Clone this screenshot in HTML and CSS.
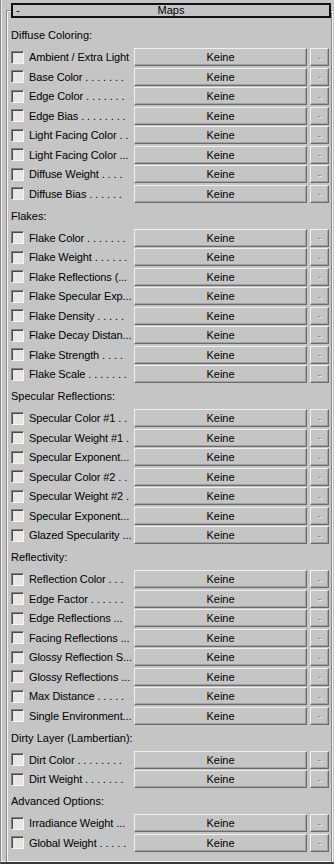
FILE: index.html
```html
<!DOCTYPE html>
<html>
<head>
<meta charset="utf-8">
<link rel="stylesheet" href="styles.css">
</head>
<body>
<div class="window">
  <div class="header"><span class="hminus">-</span><span class="htitle">Maps</span><span></span></div>
  <div class="frame">
    <div class="section">
      <div class="stitle">Diffuse Coloring:</div>
      <div class="row"><span class="cb"></span><span class="lbl">Ambient / Extra Light</span><span class="btn">Keine</span><span class="sbtn">-</span></div>
      <div class="row"><span class="cb"></span><span class="lbl">Base Color . . . . . . .</span><span class="btn">Keine</span><span class="sbtn">-</span></div>
      <div class="row"><span class="cb"></span><span class="lbl">Edge Color . . . . . . .</span><span class="btn">Keine</span><span class="sbtn">-</span></div>
      <div class="row"><span class="cb"></span><span class="lbl">Edge Bias . . . . . . . .</span><span class="btn">Keine</span><span class="sbtn">-</span></div>
      <div class="row"><span class="cb"></span><span class="lbl">Light Facing Color . .</span><span class="btn">Keine</span><span class="sbtn">-</span></div>
      <div class="row"><span class="cb"></span><span class="lbl">Light Facing Color ...</span><span class="btn">Keine</span><span class="sbtn">-</span></div>
      <div class="row"><span class="cb"></span><span class="lbl">Diffuse Weight . . . .</span><span class="btn">Keine</span><span class="sbtn">-</span></div>
      <div class="row"><span class="cb"></span><span class="lbl">Diffuse Bias . . . . . .</span><span class="btn">Keine</span><span class="sbtn">-</span></div>
    </div>
    <div class="section">
      <div class="stitle">Flakes:</div>
      <div class="row"><span class="cb"></span><span class="lbl">Flake Color . . . . . . .</span><span class="btn">Keine</span><span class="sbtn">-</span></div>
      <div class="row"><span class="cb"></span><span class="lbl">Flake Weight . . . . . .</span><span class="btn">Keine</span><span class="sbtn">-</span></div>
      <div class="row"><span class="cb"></span><span class="lbl">Flake Reflections (...</span><span class="btn">Keine</span><span class="sbtn">-</span></div>
      <div class="row"><span class="cb"></span><span class="lbl">Flake Specular Exp...</span><span class="btn">Keine</span><span class="sbtn">-</span></div>
      <div class="row"><span class="cb"></span><span class="lbl">Flake Density . . . . .</span><span class="btn">Keine</span><span class="sbtn">-</span></div>
      <div class="row"><span class="cb"></span><span class="lbl">Flake Decay Distan...</span><span class="btn">Keine</span><span class="sbtn">-</span></div>
      <div class="row"><span class="cb"></span><span class="lbl">Flake Strength . . . .</span><span class="btn">Keine</span><span class="sbtn">-</span></div>
      <div class="row"><span class="cb"></span><span class="lbl">Flake Scale . . . . . . .</span><span class="btn">Keine</span><span class="sbtn">-</span></div>
    </div>
    <div class="section">
      <div class="stitle">Specular Reflections:</div>
      <div class="row"><span class="cb"></span><span class="lbl">Specular Color #1 . .</span><span class="btn">Keine</span><span class="sbtn">-</span></div>
      <div class="row"><span class="cb"></span><span class="lbl">Specular Weight #1 .</span><span class="btn">Keine</span><span class="sbtn">-</span></div>
      <div class="row"><span class="cb"></span><span class="lbl">Specular Exponent...</span><span class="btn">Keine</span><span class="sbtn">-</span></div>
      <div class="row"><span class="cb"></span><span class="lbl">Specular Color #2 . .</span><span class="btn">Keine</span><span class="sbtn">-</span></div>
      <div class="row"><span class="cb"></span><span class="lbl">Specular Weight #2 .</span><span class="btn">Keine</span><span class="sbtn">-</span></div>
      <div class="row"><span class="cb"></span><span class="lbl">Specular Exponent...</span><span class="btn">Keine</span><span class="sbtn">-</span></div>
      <div class="row"><span class="cb"></span><span class="lbl">Glazed Specularity ...</span><span class="btn">Keine</span><span class="sbtn">-</span></div>
    </div>
    <div class="section">
      <div class="stitle">Reflectivity:</div>
      <div class="row"><span class="cb"></span><span class="lbl">Reflection Color . . .</span><span class="btn">Keine</span><span class="sbtn">-</span></div>
      <div class="row"><span class="cb"></span><span class="lbl">Edge Factor . . . . . .</span><span class="btn">Keine</span><span class="sbtn">-</span></div>
      <div class="row"><span class="cb"></span><span class="lbl">Edge Reflections ...</span><span class="btn">Keine</span><span class="sbtn">-</span></div>
      <div class="row"><span class="cb"></span><span class="lbl">Facing Reflections ...</span><span class="btn">Keine</span><span class="sbtn">-</span></div>
      <div class="row"><span class="cb"></span><span class="lbl">Glossy Reflection S...</span><span class="btn">Keine</span><span class="sbtn">-</span></div>
      <div class="row"><span class="cb"></span><span class="lbl">Glossy Reflections ...</span><span class="btn">Keine</span><span class="sbtn">-</span></div>
      <div class="row"><span class="cb"></span><span class="lbl">Max Distance . . . . .</span><span class="btn">Keine</span><span class="sbtn">-</span></div>
      <div class="row"><span class="cb"></span><span class="lbl">Single Environment...</span><span class="btn">Keine</span><span class="sbtn">-</span></div>
    </div>
    <div class="section">
      <div class="stitle">Dirty Layer (Lambertian):</div>
      <div class="row"><span class="cb"></span><span class="lbl">Dirt Color . . . . . . . .</span><span class="btn">Keine</span><span class="sbtn">-</span></div>
      <div class="row"><span class="cb"></span><span class="lbl">Dirt Weight . . . . . . .</span><span class="btn">Keine</span><span class="sbtn">-</span></div>
    </div>
    <div class="section">
      <div class="stitle">Advanced Options:</div>
      <div class="row"><span class="cb"></span><span class="lbl">Irradiance Weight ...</span><span class="btn">Keine</span><span class="sbtn">-</span></div>
      <div class="row"><span class="cb"></span><span class="lbl">Global Weight . . . . .</span><span class="btn">Keine</span><span class="sbtn">-</span></div>
    </div>
  </div>
</div>
</body>
</html>
```
FILE: styles.css
```css
* { box-sizing: border-box; }
html, body { margin: 0; padding: 0; }
body {
  background: #c5c5c5;
  font-family: "Liberation Sans", Arial, sans-serif;
  font-size: 11px;
  color: #000;
  overflow: hidden;
}
.window {
  height: 864px;
  display: flex;
  flex-direction: column;
  border-left: 1px solid #8c8c8c;
  border-bottom: 2px solid #3a3a3a;
  box-shadow: inset 1px 0 #ececec, inset 0 -1px #f4f4f4;
}
.header {
  position: relative;
  z-index: 1;
  margin: 3px 0 0 10px;
  width: 320px;
  height: 15px;
  border: 2px solid #111;
  background: #c5c5c5;
  display: grid;
  grid-template-columns: 1fr auto 1fr;
  align-items: center;
  line-height: 11px;
}
.hminus { padding-left: 3px; }
.htitle { text-align: center; }
.frame {
  flex: 1;
  margin: -8px 1px 0 5px;
  border-left: 1px solid #8a8a8a;
  border-top: 1px solid #8a8a8a;
  border-right: 1px solid #f4f4f4;
  box-shadow: inset 1px 1px #f4f4f4, inset -1px 0 #8a8a8a;
  padding: 12px 0 0 4px;
}
.stitle {
  height: 24.5px;
  display: flex;
  align-items: center;
  white-space: nowrap;
}
.row {
  height: 19.5px;
  display: flex;
  align-items: center;
}
.cb {
  flex: none;
  width: 13px;
  height: 13px;
  margin-right: 5px;
  border: 1px solid;
  border-color: #808080 #f4f4f4 #f4f4f4 #808080;
  box-shadow: inset 1px 1px #4a4a4a;
  background: #e6e6e6;
}
.lbl {
  flex: none;
  width: 104px;
  margin-right: 1px;
  white-space: nowrap;
  letter-spacing: -0.1px;
}
.btn, .sbtn {
  flex: none;
  height: 18px;
  border: 1px solid;
  border-color: #f0f0f0 #6a6a6a #6a6a6a #f0f0f0;
  box-shadow: inset -1px -1px #a2a2a2;
  display: flex;
  align-items: center;
  justify-content: center;
}
.btn {
  width: 173px;
  margin-right: 3px;
}
.sbtn {
  width: 19px;
  color: #808080;
  text-shadow: 1px 1px #f4f4f4;
  font-size: 10px;
}
```
